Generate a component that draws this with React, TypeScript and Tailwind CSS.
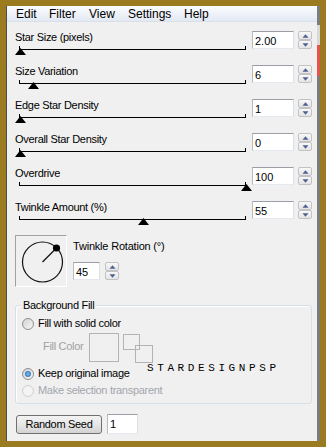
import React from "react";

const FONT = "font-['Liberation_Sans',Arial,sans-serif]";

function SpinBtn({ up }: { up?: boolean }) {
  return (
    <div className="flex h-[9px] w-[14px] items-center justify-center rounded-[2px] border border-[#c3c3c3] bg-linear-to-b from-[#f8f8f8] to-[#e4e4e4]">
      <svg width="7" height="4" viewBox="0 0 7 4">
        <path d={up ? "M0.5 3.8L3.5 0.3L6.5 3.8Z" : "M0.5 0.2L3.5 3.7L6.5 0.2Z"} fill="#4d6190" />
      </svg>
    </div>
  );
}

function Spinner() {
  return (
    <div className="flex flex-col">
      <SpinBtn up />
      <SpinBtn />
    </div>
  );
}

function TextBox({ value, className }: { value: string; className: string }) {
  return (
    <div
      className={`h-[18px] border border-t-[#9c9ea6] border-l-[#b9bbc2] border-r-[#dbdfe6] border-b-[#e3e9ef] bg-white pl-[2px] pt-[1px] text-[11px] leading-[16px] text-black ${className}`}
    >
      {value}
    </div>
  );
}

function SliderRow({ label, value, pos }: { label: string; value: string; pos: number }) {
  return (
    <div className="flex h-[34px] pr-[5px]">
      <div className="flex flex-1 flex-col">
        <div className="pl-[8px] text-[11px] leading-[13px] tracking-[-0.3px] text-black">{label}</div>
        <div className="relative ml-[12px] mt-[2px] h-[4px] w-[227px] border-b border-l border-r border-black">
          <svg
            className="absolute top-[2px]"
            style={{ left: pos - 20 - 5.5 }}
            width="11"
            height="7"
            viewBox="0 0 11 7"
          >
            <path d="M0 7L5.5 0L11 7Z" fill="#000" />
          </svg>
        </div>
      </div>
      <TextBox value={value} className="w-[42px]" />
      <div className="ml-[4px]">
        <Spinner />
      </div>
    </div>
  );
}

function Radio({ checked, disabled }: { checked?: boolean; disabled?: boolean }) {
  if (disabled) {
    return <div className="h-[12px] w-[12px] rounded-full border border-[#cfcfcf] bg-[#f4f4f4]" />;
  }
  return (
    <div className="flex h-[12px] w-[12px] items-center justify-center rounded-full border border-[#8e8f8f] bg-linear-to-br from-[#d2d2d2] to-[#f8f8f8]">
      {checked && (
        <div className="h-[6px] w-[6px] rounded-full bg-radial from-[#7cc0f2] to-[#1a5fae]" />
      )}
    </div>
  );
}

export default function App() {
  const rows = [
    { label: "Star Size (pixels)", value: "2.00", pos: 20 },
    { label: "Size Variation", value: "6", pos: 33.5 },
    { label: "Edge Star Density", value: "1", pos: 20 },
    { label: "Overall Star Density", value: "0", pos: 20 },
    { label: "Overdrive", value: "100", pos: 246 },
    { label: "Twinkle Amount (%)", value: "55", pos: 143.5 },
  ];
  return (
    <div className={`h-[447px] w-[326px] bg-[#9a7b1f] pb-[6px] pl-[6px] pr-[6px] pt-[6px] ${FONT}`}>
      <div className="flex h-full">
        <div className="w-[1px] bg-[#4e4e4e]" />
        <div className="flex w-[310px] flex-col bg-[#f0f0f0]">
          {/* menu bar */}
          <div className="flex h-[16px] border-b border-[#d9e0ea] bg-linear-to-b from-[#fbfcfe] to-[#e3e9f3] pl-[9px] text-[12px] leading-[17px] text-black">
            <span className="w-[33px]">Edit</span>
            <span className="w-[40px]">Filter</span>
            <span className="w-[39px]">View</span>
            <span className="w-[56px]">Settings</span>
            <span>Help</span>
          </div>

          <div className="mt-[9px] flex flex-col">
            {rows.map((r) => (
              <SliderRow key={r.label} label={r.label} value={r.value} pos={r.pos} />
            ))}
          </div>

          {/* twinkle rotation */}
          <div className="flex pl-[8px]">
            <div className="h-[52px] w-[52px] border border-b-white border-l-[#a0a0a0] border-r-white border-t-[#a0a0a0]">
              <svg width="50" height="50" viewBox="0 0 50 50">
                <circle cx="26.5" cy="26" r="20" fill="none" stroke="#111" strokeWidth="1.2" />
                <line x1="26.5" y1="26" x2="40.5" y2="12" stroke="#111" strokeWidth="1.2" />
                <circle cx="40.5" cy="12" r="3.6" fill="#000" />
              </svg>
            </div>
            <div className="ml-[6px] flex flex-col">
              <div className="mt-[5px] text-[11px] leading-[13px] tracking-[-0.2px] text-black">Twinkle Rotation (°)</div>
              <div className="mt-[9px] flex">
                <TextBox value="45" className="w-[27px]" />
                <div className="ml-[5px]">
                  <Spinner />
                </div>
              </div>
            </div>
          </div>

          {/* background fill group */}
          <div className="relative ml-[8px] mt-[18px] h-[99px] w-[297px] rounded-[3px] border border-[#d5dfe5] shadow-[inset_1px_1px_0_#ffffff]">
            <div className="absolute left-[5px] top-[-7px] bg-[#f0f0f0] px-[2px] text-[11px] leading-[13px] tracking-[-0.3px] text-black">
              Background Fill
            </div>
            <div className="flex flex-col pl-[6px] pt-[11px] text-[11px] leading-[13px] tracking-[-0.3px]">
              <div className="flex h-[13px] items-center">
                <Radio />
                <span className="ml-[4px] text-black">Fill with solid color</span>
              </div>
              <div className="mt-[3px] flex h-[30px]">
                <span className="ml-[21px] mt-[7px] text-[#a0a0a0]">Fill Color</span>
                <div className="ml-[6px] h-[29px] w-[30px] border border-[#b4b4b4]" />
                <div className="relative ml-[4px] h-[30px] w-[31px]">
                  <div className="absolute left-0 top-[1px] h-[16px] w-[17px] border border-[#b4b4b4]" />
                  <div className="absolute left-[12px] top-[12px] h-[18px] w-[18px] border border-[#b4b4b4]" />
                </div>
              </div>
              <div className="mt-[4px] flex h-[13px] items-center">
                <Radio checked />
                <span className="ml-[4px] text-black">Keep original image</span>
              </div>
              <div className="mt-[4px] flex h-[13px] items-center">
                <Radio disabled />
                <span className="ml-[4px] text-[#a3a6ad]">Make selection transparent</span>
              </div>
            </div>
            <div className="absolute left-[131px] top-[57px] font-['Liberation_Mono',monospace] text-[11px] leading-[11px] tracking-[3.6px] text-black">
              STARDESIGNPSP
            </div>
          </div>

          {/* random seed */}
          <div className="ml-[9px] mt-[10px] flex items-start">
            <div className="mt-[1px] flex h-[19px] w-[86px] items-center justify-center rounded-[3px] border border-[#707070] bg-linear-to-b from-[#f3f3f3] via-[#e6e6e6] to-[#d3d3d3] text-[11px] leading-[13px] tracking-[-0.3px] text-black">
              Random Seed
            </div>
            <TextBox value="1" className="ml-[5px] h-[20px] w-[31px]" />
          </div>
        </div>
        <div className="flex w-[3px] flex-col bg-[#7c7c7c]">
          <div className="mt-[19px] h-[20px] bg-[#d8d8d8]" />
          <div className="h-[31px] bg-[#e5534f]" />
        </div>
      </div>
    </div>
  );
}
